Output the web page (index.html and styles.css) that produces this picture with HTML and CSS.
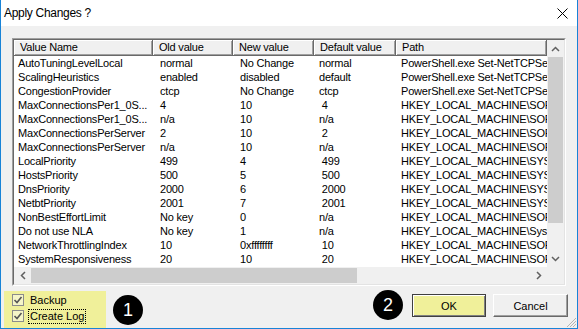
FILE: index.html
```html
<!DOCTYPE html>
<html>
<head>
    <title>Apply Changes ?</title>
    <link rel="stylesheet" href="styles.css">
</head>
<body>
    <div class="window">
        <div class="titlebar">
            <span class="title">Apply Changes ?</span>
            <svg class="close" width="11" height="11" viewBox="0 0 11 11">
                <path d="M0.5 0.5 L10.5 10.5 M10.5 0.5 L0.5 10.5" stroke="#000" stroke-width="1" fill="none"/>
            </svg>
        </div>
        <div class="client">
            <div class="listbox">
                <div class="listbox-inner">
                    <div class="view">
                        <div class="head">
                            <span>Value Name</span>
                            <span>Old value</span>
                            <span>New value</span>
                            <span>Default value</span>
                            <span>Path</span>
                        </div>
                        <div class="row"><span>AutoTuningLevelLocal</span><span>normal</span><span>No Change</span><span>normal</span><span>PowerShell.exe Set-NetTCPSetting -SettingName InternetCustom</span></div>
                        <div class="row"><span>ScalingHeuristics</span><span>enabled</span><span>disabled</span><span>default</span><span>PowerShell.exe Set-NetTCPSetting -ScalingHeuristics</span></div>
                        <div class="row"><span>CongestionProvider</span><span>ctcp</span><span>No Change</span><span>ctcp</span><span>PowerShell.exe Set-NetTCPSetting -CongestionProvider</span></div>
                        <div class="row"><span>MaxConnectionsPer1_0S...</span><span>4</span><span>10</span><span> 4</span><span>HKEY_LOCAL_MACHINE\SOFTWARE\Microsoft\Internet Explorer</span></div>
                        <div class="row"><span>MaxConnectionsPer1_0S...</span><span>n/a</span><span>10</span><span>n/a</span><span>HKEY_LOCAL_MACHINE\SOFTWARE\Wow6432Node\Microsoft</span></div>
                        <div class="row"><span>MaxConnectionsPerServer</span><span>2</span><span>10</span><span> 2</span><span>HKEY_LOCAL_MACHINE\SOFTWARE\Microsoft\Internet Explorer</span></div>
                        <div class="row"><span>MaxConnectionsPerServer</span><span>n/a</span><span>10</span><span>n/a</span><span>HKEY_LOCAL_MACHINE\SOFTWARE\Wow6432Node\Microsoft</span></div>
                        <div class="row"><span>LocalPriority</span><span>499</span><span>4</span><span> 499</span><span>HKEY_LOCAL_MACHINE\SYSTEM\CurrentControlSet\Services</span></div>
                        <div class="row"><span>HostsPriority</span><span>500</span><span>5</span><span> 500</span><span>HKEY_LOCAL_MACHINE\SYSTEM\CurrentControlSet\Services</span></div>
                        <div class="row"><span>DnsPriority</span><span>2000</span><span>6</span><span> 2000</span><span>HKEY_LOCAL_MACHINE\SYSTEM\CurrentControlSet\Services</span></div>
                        <div class="row"><span>NetbtPriority</span><span>2001</span><span>7</span><span> 2001</span><span>HKEY_LOCAL_MACHINE\SYSTEM\CurrentControlSet\Services</span></div>
                        <div class="row"><span>NonBestEffortLimit</span><span>No key</span><span>0</span><span>n/a</span><span>HKEY_LOCAL_MACHINE\SOFTWARE\Policies\Microsoft\Windows</span></div>
                        <div class="row"><span>Do not use NLA</span><span>No key</span><span>1</span><span>n/a</span><span>HKEY_LOCAL_MACHINE\System\CurrentControlSet\Services</span></div>
                        <div class="row"><span>NetworkThrottlingIndex</span><span>10</span><span>0xffffffff</span><span> 10</span><span>HKEY_LOCAL_MACHINE\SOFTWARE\Microsoft\Windows NT</span></div>
                        <div class="row"><span>SystemResponsiveness</span><span>20</span><span>10</span><span> 20</span><span>HKEY_LOCAL_MACHINE\SOFTWARE\Microsoft\Windows NT</span></div>
                    </div>
                    <div class="vscroll">
                        <div class="arrow">
                            <svg width="9" height="6" viewBox="0 0 9 6"><path d="M1 5 L4.5 1.5 L8 5" stroke="#606060" stroke-width="1.5" fill="none"/></svg>
                        </div>
                        <div class="vthumb"></div>
                        <div class="track"></div>
                        <div class="arrow">
                            <svg width="9" height="6" viewBox="0 0 9 6"><path d="M1 1 L4.5 4.5 L8 1" stroke="#606060" stroke-width="1.5" fill="none"/></svg>
                        </div>
                    </div>
                    <div class="hscroll">
                        <div class="arrow">
                            <svg width="6" height="9" viewBox="0 0 6 9"><path d="M5 1 L1.5 4.5 L5 8" stroke="#606060" stroke-width="1.5" fill="none"/></svg>
                        </div>
                        <div class="hthumb"></div>
                        <div class="track"></div>
                        <div class="arrow">
                            <svg width="6" height="9" viewBox="0 0 6 9"><path d="M1 1 L4.5 4.5 L1 8" stroke="#606060" stroke-width="1.5" fill="none"/></svg>
                        </div>
                    </div>
                    <div class="corner"></div>
                </div>
            </div>
            <div class="footer">
                <div class="options">
                    <div class="check">
                        <svg width="12" height="12" viewBox="0 0 12 12"><rect x="0.5" y="0.5" width="11" height="11" fill="#f5f5c8" stroke="#8c8c8c"/><path d="M2.5 6 L5 8.5 L9.5 3" stroke="#555" stroke-width="1.6" fill="none"/></svg>
                        <span class="label">Backup</span>
                    </div>
                    <div class="check">
                        <svg width="12" height="12" viewBox="0 0 12 12"><rect x="0.5" y="0.5" width="11" height="11" fill="#f5f5c8" stroke="#8c8c8c"/><path d="M2.5 6 L5 8.5 L9.5 3" stroke="#555" stroke-width="1.6" fill="none"/></svg>
                        <span class="label focus">Create Log</span>
                    </div>
                </div>
                <div class="buttons">
                    <button class="btn default">OK</button>
                    <button class="btn">Cancel</button>
                </div>
            </div>
        </div>
        <span class="marker m1">1</span>
        <span class="marker m2">2</span>
        <svg class="grip" width="12" height="12" viewBox="0 0 12 12">
            <path d="M11 2 L2 11 M11 5 L5 11 M11 8 L8 11" stroke="#b4b4b4" stroke-width="1" fill="none"/>
        </svg>
    </div>
</body>
</html>
```

FILE: styles.css
```css
body {
    margin: 0;
    background-color: #ffffff;
    font-family: "Liberation Sans", Arial, sans-serif;
}
.window {
    position: relative;
    width: 578px;
    height: 329px;
    box-sizing: border-box;
    border: 1px solid #1883d7;
    border-top: none;
    background-color: #f0f0f0;
    display: flex;
    flex-direction: column;
}
.titlebar {
    height: 26px;
    flex: none;
    background-color: #ffffff;
    display: flex;
    align-items: center;
    justify-content: space-between;
    padding: 0 9px 0 3px;
}
.title {
    font-size: 12px;
    letter-spacing: -0.3px;
    color: #000;
}
.client {
    flex: 1;
    display: flex;
    flex-direction: column;
    padding-top: 12px;
}
.listbox {
    margin-left: 11px;
    width: 554px;
    height: 248px;
    box-sizing: border-box;
    border: 1px solid;
    border-color: #a0a0a0 #ffffff #ffffff #a0a0a0;
}
.listbox-inner {
    height: 100%;
    box-sizing: border-box;
    border: 1px solid;
    border-color: #696969 #e3e3e3 #e3e3e3 #696969;
    background-color: #ffffff;
    display: grid;
    grid-template-columns: 1fr 17px;
    grid-template-rows: 1fr 17px;
}
.view {
    overflow: hidden;
    font-size: 11px;
    letter-spacing: -0.2px;
    color: #000;
}
.head, .row {
    display: grid;
    grid-template-columns: 139px 80px 81px 82px 151px;
}
.head {
    height: 16px;
}
.head span {
    box-sizing: border-box;
    padding-left: 6px;
    line-height: 15px;
    background-color: #f0f0f0;
    border-right: 1px solid #696969;
    border-bottom: 1px solid #696969;
    box-shadow: inset 1px 1px #ffffff, inset -1px -1px #a0a0a0;
    white-space: nowrap;
    overflow: hidden;
}
.row {
    height: 14px;
    line-height: 14px;
}
.row span {
    padding-left: 7px;
    white-space: pre;
    overflow: hidden;
}
.row span:first-child {
    padding-left: 4px;
}
.row span:nth-child(4), .row span:nth-child(5) {
    padding-left: 5px;
}
.vscroll {
    background-color: #f0f0f0;
    display: flex;
    flex-direction: column;
}
.hscroll {
    background-color: #f0f0f0;
    display: flex;
}
.arrow {
    width: 17px;
    height: 17px;
    flex: none;
    display: flex;
    align-items: center;
    justify-content: center;
}
.vthumb {
    height: 166px;
    margin: 0 1px;
    background-color: #cdcdcd;
}
.hthumb {
    width: 326px;
    margin: 1px 0;
    background-color: #cdcdcd;
}
.track {
    flex: 1;
}
.corner {
    background-color: #f0f0f0;
}
.footer {
    flex: 1;
    display: flex;
    justify-content: space-between;
    padding: 5px 9px 0 3px;
}
.options {
    width: 102px;
    background-color: #f0f09a;
    padding: 1px 0 0 8px;
    box-sizing: border-box;
}
.check {
    height: 16px;
    display: flex;
    align-items: center;
    gap: 4px;
    font-size: 11px;
}
.label {
    border: 1px dotted transparent;
    padding: 0 1px;
    line-height: 13px;
}
.label.focus {
    border-color: #000;
}
.buttons {
    display: flex;
    gap: 7px;
    padding-top: 3px;
}
.btn {
    width: 75px;
    height: 23px;
    font-family: "Liberation Sans", Arial, sans-serif;
    font-size: 11px;
    color: #000;
    background-color: #f0f0f0;
    border: 1px solid;
    border-color: #ffffff #696969 #696969 #ffffff;
    box-shadow: inset -1px -1px #a0a0a0;
    padding: 0;
}
.btn.default {
    width: 74px;
    background-color: #f0f09a;
    border-color: #404040;
    box-shadow: inset 1px 1px #ffffff, inset -1px -1px #808080;
}
.marker {
    position: absolute;
    width: 30px;
    height: 30px;
    border-radius: 50%;
    background-color: #000;
    color: #fff;
    font-family: "Liberation Sans", Arial, sans-serif;
    font-size: 18px;
    display: flex;
    align-items: center;
    justify-content: center;
}
.m1 {
    left: 112px;
    top: 295px;
}
.m2 {
    left: 372px;
    top: 290px;
}
.grip {
    position: absolute;
    right: 0;
    bottom: 0;
}
```
